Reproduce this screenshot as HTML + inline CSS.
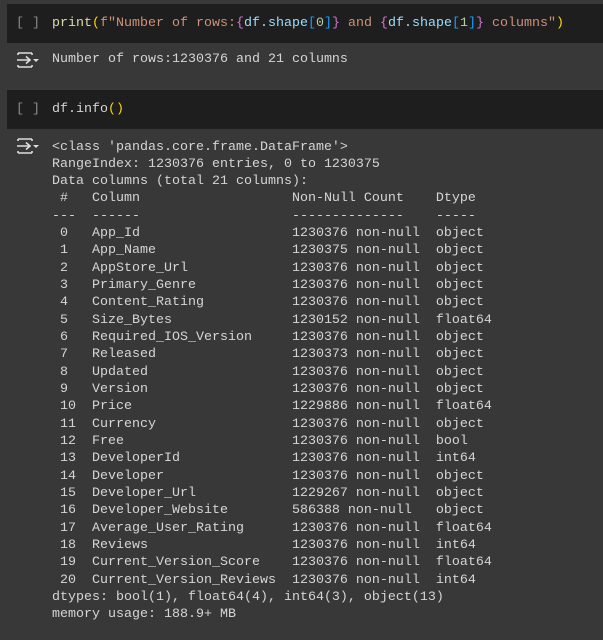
<!DOCTYPE html>
<html><head><style>
body{margin:0;width:603px;height:640px;background:#383838;overflow:hidden;font-family:"Liberation Mono",monospace;font-size:13.33px;color:#d5d5d5;position:relative}
.cell{position:absolute;left:7px;right:0;height:39px;background:#1e1e1e}
.br{position:absolute;left:16px;color:#8a8a8a;font-size:13.33px}
.code{position:absolute;left:52px;white-space:pre;color:#d4d4d4}
.out{position:absolute;left:52px;white-space:pre;line-height:17.33px}
.ic{position:absolute;left:16px}
.f{color:#dcdcaa}.s{color:#ce9178}.p1{color:#ffd700}.p2{color:#da70d6}.p3{color:#179fff}.v{color:#9cdcfe}.n{color:#b5cea8}
</style></head><body>
<div class="cell" style="top:4px"></div>
<div class="br" style="top:16px">[ ]</div>
<div class="code" style="top:16px"><span class="f">print</span><span class="p1">(</span><span class="s">f"Number of rows:</span><span class="p2">{</span><span class="v">df.shape</span><span class="p3">[</span><span class="n">0</span><span class="p3">]</span><span class="p2">}</span><span class="s"> and </span><span class="p2">{</span><span class="v">df.shape</span><span class="p3">[</span><span class="n">1</span><span class="p3">]</span><span class="p2">}</span><span class="s"> columns"</span><span class="p1">)</span></div>
<svg class="ic" style="top:51px" width="24" height="18" viewBox="0 0 24 18"><g stroke="#ddd" stroke-width="1.6" fill="none"><path d="M2 2H16M2 2V4M16 2V4"/><path d="M1 9H14M10 5.5L14 9L10 12.5"/><path d="M2 16H16M2 16V14M16 16V14"/></g><path d="M17 8H23L20 11Z" fill="#ddd"/></svg>
<div class="out" style="top:51px">Number of rows:1230376 and 21 columns</div>
<div class="cell" style="top:90px"></div>
<div class="br" style="top:102px">[ ]</div>
<div class="code" style="top:102px">df.info<span class="p1">()</span></div>
<svg class="ic" style="top:137px" width="24" height="18" viewBox="0 0 24 18"><g stroke="#ddd" stroke-width="1.6" fill="none"><path d="M2 2H16M2 2V4M16 2V4"/><path d="M1 9H14M10 5.5L14 9L10 12.5"/><path d="M2 16H16M2 16V14M16 16V14"/></g><path d="M17 8H23L20 11Z" fill="#ddd"/></svg>
<div class="out" style="top:138.5px">&lt;class 'pandas.core.frame.DataFrame'&gt;
RangeIndex: 1230376 entries, 0 to 1230375
Data columns (total 21 columns):
 #   Column                   Non-Null Count    Dtype  
---  ------                   --------------    -----  
 0   App_Id                   1230376 non-null  object 
 1   App_Name                 1230375 non-null  object 
 2   AppStore_Url             1230376 non-null  object 
 3   Primary_Genre            1230376 non-null  object 
 4   Content_Rating           1230376 non-null  object 
 5   Size_Bytes               1230152 non-null  float64
 6   Required_IOS_Version     1230376 non-null  object 
 7   Released                 1230373 non-null  object 
 8   Updated                  1230376 non-null  object 
 9   Version                  1230376 non-null  object 
 10  Price                    1229886 non-null  float64
 11  Currency                 1230376 non-null  object 
 12  Free                     1230376 non-null  bool   
 13  DeveloperId              1230376 non-null  int64  
 14  Developer                1230376 non-null  object 
 15  Developer_Url            1229267 non-null  object 
 16  Developer_Website        586388 non-null   object 
 17  Average_User_Rating      1230376 non-null  float64
 18  Reviews                  1230376 non-null  int64  
 19  Current_Version_Score    1230376 non-null  float64
 20  Current_Version_Reviews  1230376 non-null  int64  
dtypes: bool(1), float64(4), int64(3), object(13)
memory usage: 188.9+ MB</div>
</body></html>
